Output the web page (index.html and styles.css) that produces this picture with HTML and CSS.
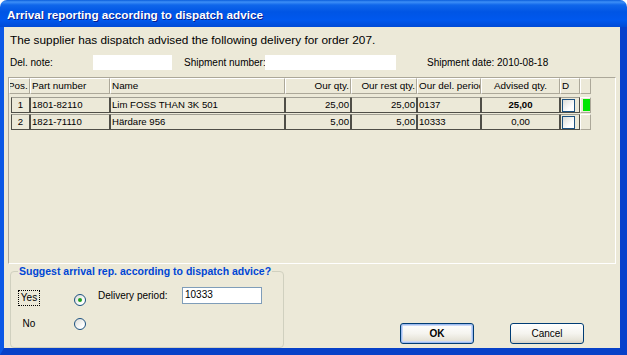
FILE: index.html
```html
<!DOCTYPE html>
<html lang="en">

<head>
  <meta charset="UTF-8">
  <meta name="viewport" content="width=device-width, initial-scale=1.0">
  <link rel="stylesheet" href="styles.css">
</head>

<body>
  <div class="window">
    <div class="titlebar">Arrival reporting according to dispatch advice</div>

    <div class="content">
      <p class="intro">The supplier has dispatch advised the following delivery for order 207.</p>

      <div class="fields">
        <span class="label label-del">Del. note:</span>
        <span class="field field-del"></span>
        <span class="label label-ship">Shipment number:</span>
        <span class="field field-ship"></span>
        <span class="label label-date">Shipment date: 2010-08-18</span>
      </div>

      <div class="grid">
        <div class="cols head">
          <div class="pos-head"><span>Pos.</span></div>
          <div>Part number</div>
          <div>Name</div>
          <div class="right">Our qty.</div>
          <div class="right">Our rest qty.</div>
          <div>Our del. period</div>
          <div class="center">Advised qty.</div>
          <div>D</div>
          <div></div>
        </div>

        <div class="cols row first">
          <div class="center">1</div>
          <div>1801-82110</div>
          <div>Lim FOSS THAN 3K 501</div>
          <div class="right">25,00</div>
          <div class="right">25,00</div>
          <div>0137</div>
          <div class="center bold">25,00</div>
          <div class="check-cell"><span class="check"></span></div>
          <div class="flag-cell"><span class="flag"></span></div>
        </div>

        <div class="cols row">
          <div class="center">2</div>
          <div>1821-71110</div>
          <div>Härdare 956</div>
          <div class="right">5,00</div>
          <div class="right">5,00</div>
          <div>10333</div>
          <div class="center">0,00</div>
          <div class="check-cell"><span class="check"></span></div>
          <div class="flag-cell"></div>
        </div>
      </div>

      <div class="bottom">
        <fieldset class="group">
          <legend>Suggest arrival rep. according to dispatch advice?</legend>
          <div class="option option-yes">
            <span class="opt-label focused">Yes</span>
            <span class="radio checked"></span>
            <span class="label period-label">Delivery period:</span>
            <span class="field period">10333</span>
          </div>
          <div class="option option-no">
            <span class="opt-label">No</span>
            <span class="radio"></span>
          </div>
        </fieldset>

        <div class="buttons">
          <button class="btn btn-default">OK</button>
          <button class="btn">Cancel</button>
        </div>
      </div>
    </div>
  </div>
</body>

</html>
```

FILE: styles.css
```css
body {
  margin: 0;
  background-color: #fff;
  font-family: "Liberation Sans", Arial, sans-serif;
  color: #000;
}

.window {
  width: 627px;
  height: 355px;
  display: flex;
  flex-direction: column;
}

.titlebar {
  height: 27px;
  box-sizing: border-box;
  padding: 2px 0 0 7px;
  line-height: 26px;
  font-size: 11.7px;
  font-weight: bold;
  color: #fff;
  text-shadow: 1px 1px 0 #0a1e8c;
  border-radius: 7px 7px 0 0;
  background: linear-gradient(to bottom, #0a5ddb 0, #3d8ff7 2px, #0f66ea 5px, #0055e5 12px, #0058ee 20px, #004ad6 27px);
}

.content {
  flex: 1;
  background-color: #ece9d8;
  border-left: 4px solid #0b58e6;
  border-right: 7px solid #0740cc;
  border-bottom: 7px solid #0741c8;
  padding: 0 4px;
  display: flex;
  flex-direction: column;
}

.intro {
  margin: 6px 0 0 2px;
  font-size: 11.8px;
  line-height: 14px;
}

/* header fields */
.fields {
  display: flex;
  align-items: center;
  height: 15px;
  margin-top: 8px;
  font-size: 10px;
}

.label {
  line-height: 13px;
  white-space: nowrap;
}

.field {
  background-color: #fff;
  height: 15px;
}

.label-del {
  width: 83px;
  padding-left: 2px;
}

.field-del {
  width: 79px;
}

.label-ship {
  width: 81px;
  margin-left: 12px;
}

.field-ship {
  width: 131px;
}

.label-date {
  margin-left: 31px;
}

/* dispatch lines grid */
.grid {
  margin-top: 7px;
  height: 187px;
  box-sizing: border-box;
  border: 1px solid;
  border-color: #aca899 #fff #fff #aca899;
  overflow: hidden;
  font-size: 9.6px;
}

.cols {
  display: grid;
  grid-template-columns: 21px 80px 175px 66px 66px 64px 79px 20px 11px;
}

.cols > div {
  box-sizing: border-box;
  line-height: 14px;
  white-space: nowrap;
  overflow: hidden;
  padding: 0 1px;
}

.head {
  font-size: 9.9px;
}

.head > div {
  border: 1px solid;
  border-color: #fff #aca899 #aca899 #fff;
}

.head .pos-head span {
  margin-left: -3px;
}

.row {
  margin-top: 1px;
}

.row.first {
  margin-top: 3px;
}

.row > div {
  border: 1px solid #4f4e47;
  border-top-color: #a19f93;
}

.row > div:first-child {
  margin-left: 2px;
}

.row > .flag-cell {
  border-color: #fff #aca899 #aca899 #fff;
  padding: 1px 1px 1px 2px;
}

.right {
  text-align: right;
}

.center {
  text-align: center;
}

.bold {
  font-weight: bold;
}

.check-cell {
  display: flex;
}

.check {
  display: block;
  width: 11px;
  height: 11px;
  margin-top: 1px;
  background: linear-gradient(135deg, #dcdcd7, #fff 70%);
  border: 1px solid #1c5180;
}

.flag {
  display: block;
  width: 7px;
  height: 12px;
  background-color: #00e600;
}

/* bottom part */
.bottom {
  flex: 1;
  display: flex;
  padding-top: 1px;
}

.group {
  margin: 0 0 0 2px;
  width: 274px;
  height: 83px;
  box-sizing: border-box;
  padding: 0 0 0 7px;
  border: 1px solid #d0d0bf;
  border-radius: 4px;
  font-size: 10px;
}

.group legend {
  padding: 0 1px;
  font-size: 10.5px;
  font-weight: bold;
  line-height: 13px;
  color: #0046d5;
}

.option {
  display: flex;
  align-items: flex-start;
}

.option-yes {
  margin-top: 9px;
  height: 17px;
}

.option-no {
  margin-top: 12px;
}

.opt-label {
  width: 22px;
  box-sizing: border-box;
  text-align: center;
  line-height: 14px;
  border: 1px dotted transparent;
}

.option-yes .opt-label {
  margin-top: 3px;
}

.opt-label.focused {
  border-color: #000;
}

.radio {
  width: 12px;
  height: 12px;
  box-sizing: border-box;
  margin-left: 34px;
  border: 1px solid #1c5180;
  border-radius: 50%;
  background: linear-gradient(135deg, #dcdcd7, #fff 75%);
  display: flex;
  align-items: center;
  justify-content: center;
}

.option-yes .radio {
  margin-top: 7px;
}

.option-no .radio {
  margin-top: 2px;
}

.radio.checked::after {
  content: "";
  width: 4px;
  height: 4px;
  border-radius: 50%;
  background-color: #21a121;
}

.period-label {
  width: 84px;
  margin-left: 12px;
  line-height: 17px;
}

.field.period {
  width: 80px;
  height: 17px;
  box-sizing: border-box;
  border: 1px solid #7f9db9;
  padding-left: 2px;
  line-height: 14px;
}

.buttons {
  display: flex;
  gap: 36px;
  align-self: flex-end;
  margin: 0 0 4px 116px;
}

.btn {
  width: 74px;
  height: 21px;
  padding: 0;
  font-family: "Liberation Sans", Arial, sans-serif;
  font-size: 10px;
  color: #000;
  border: 1px solid #003c74;
  border-radius: 3px;
  background: linear-gradient(to bottom, #fff 0, #f5f4ef 50%, #e6e3d8 85%, #d6d0c5 100%);
}

.btn-default {
  font-weight: bold;
  box-shadow: inset 0 0 0 1px #9ebcf0, inset 0 0 0 2px #c9d8f8;
}
```
